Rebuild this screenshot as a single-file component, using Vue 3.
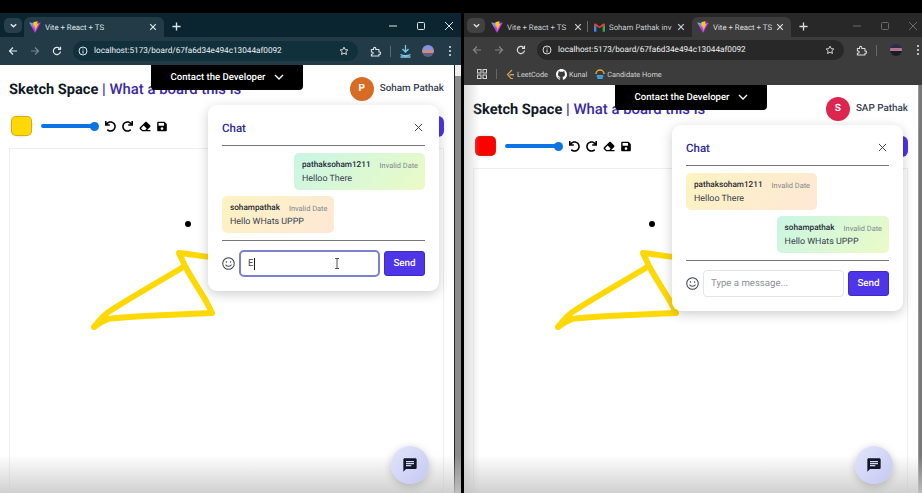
<template>
  <svg class="defs" width="0" height="0">
    <defs>
      <linearGradient id="viteA" x1="0" y1="0" x2="1" y2="1">
        <stop offset="0" stop-color="#41d1ff" />
        <stop offset="0.5" stop-color="#bd34fe" />
      </linearGradient>
      <symbol id="vite" viewBox="0 0 410 404">
        <path fill="url(#viteA)" d="M399.641 59.5246L215.643 388.545C211.844 395.338 202.084 395.378 198.228 388.618L10.5817 59.5563C6.38087 52.1896 12.6802 43.2665 21.0281 44.7586L205.223 77.6824C206.398 77.8924 207.601 77.8904 208.776 77.6763L389.119 44.8058C397.439 43.2894 403.768 52.1434 399.641 59.5246Z" />
        <path fill="#ffc517" d="M292.965 1.5744L156.801 28.2552C154.563 28.6937 152.906 30.5903 152.771 32.8664L144.395 174.33C144.198 177.662 147.258 180.248 150.51 179.498L188.42 170.749C191.967 169.931 195.172 173.055 194.443 176.622L183.18 231.775C182.422 235.487 185.907 238.661 189.532 237.56L212.947 230.446C216.577 229.344 220.065 232.527 219.297 236.242L201.398 322.875C200.278 328.294 207.486 331.249 210.492 326.603L212.5 323.5L323.454 102.072C325.312 98.3645 322.108 94.137 318.036 94.9228L279.014 102.454C275.347 103.161 272.227 99.746 273.262 96.1583L298.731 7.86689C299.767 4.27314 296.636 0.855181 292.965 1.5744Z" />
      </symbol>
      <symbol id="undo" viewBox="0 0 512 512">
        <path fill="currentColor" d="M212.333 224.333H12c-6.627 0-12-5.373-12-12V12C0 5.373 5.373 0 12 0h48c6.627 0 12 5.373 12 12v78.112C117.773 39.279 184.26 7.47 258.175 8.007c136.906.994 246.448 111.623 246.157 248.532C504.041 393.258 393.12 504 256.333 504c-64.089 0-122.496-24.313-166.51-64.215-5.099-4.622-5.334-12.554-.467-17.42l33.967-33.967c4.474-4.474 11.662-4.717 16.401-.525C170.76 415.336 211.58 432 256.333 432c97.268 0 176-78.716 176-176 0-97.267-78.716-176-176-176-58.496 0-110.28 28.476-142.274 72.333h98.274c6.627 0 12 5.373 12 12v48c0 6.627-5.373 12-12 12z" />
      </symbol>
      <symbol id="eraser" viewBox="0 0 512 512">
        <path fill="currentColor" d="M497.941 273.941c18.745-18.745 18.745-49.137 0-67.882l-160-160c-18.745-18.745-49.137-18.745-67.882 0l-256 256c-18.745 18.745-18.745 49.137 0 67.882l96 96A48.004 48.004 0 0 0 144 480h356c6.627 0 12-5.373 12-12v-40c0-6.627-5.373-12-12-12H355.883l142.058-142.059zm-302.627-62.627l137.373 137.373L265.373 416H150.628l-80-80 124.686-124.686z" />
      </symbol>
      <symbol id="save" viewBox="0 0 448 512">
        <path fill="currentColor" d="M433.941 129.941l-83.882-83.882A48 48 0 0 0 316.118 32H48C21.49 32 0 53.49 0 80v352c0 26.51 21.49 48 48 48h352c26.51 0 48-21.49 48-48V163.882a48 48 0 0 0-14.059-33.941zM224 416c-35.346 0-64-28.654-64-64 0-35.346 28.654-64 64-64s64 28.654 64 64c0 35.346-28.654 64-64 64zm96-304.52V212c0 6.627-5.373 12-12 12H76c-6.627 0-12-5.373-12-12V108c0-6.627 5.373-12 12-12h228.52c3.183 0 6.235 1.264 8.485 3.515l3.48 3.48A11.996 11.996 0 0 1 320 111.48z" />
      </symbol>
      <symbol id="star" viewBox="0 0 16 16">
        <path fill="none" stroke="currentColor" stroke-width="1.5" stroke-linejoin="round" d="M8 1.8l1.9 4 4.3.5-3.2 3 .9 4.3L8 11.5l-3.9 2.1.9-4.3-3.2-3 4.3-.5z" />
      </symbol>
      <symbol id="ext" viewBox="0 0 16 16">
        <path fill="none" stroke="currentColor" stroke-width="1.5" stroke-linejoin="round" d="M2 5h3.2V3.6a1.6 1.6 0 0 1 3.2 0V5H13v3.6h1a1.7 1.7 0 0 1 0 3.4h-1v2.5H2V12h1a1.7 1.7 0 0 0 0-3.4H2z" />
      </symbol>
    </defs>
  </svg>

  <div class="desktop">
    <section v-for="win in windows" :key="win.id" class="window" :class="win.id">
      <div class="tabstrip">
        <span class="tab-search">
          <svg width="9" height="9" viewBox="0 0 10 10"><path d="M2 3.5l3 3 3-3" fill="none" stroke="currentColor" stroke-width="1.6" /></svg>
        </span>
        <div
          v-for="tab in win.tabs"
          :key="tab.key"
          class="tab"
          :class="{ active: tab.active, sep: tab.sep }"
          :style="{ width: tab.width + 'px' }"
        >
          <svg v-if="tab.icon === 'vite'" class="favicon" width="12" height="12"><use href="#vite" /></svg>
          <svg v-else class="favicon" width="11" height="11" viewBox="0 0 16 12">
            <path d="M0 2v9a1 1 0 0 0 1 1h2.5V4.5z" fill="#4285f4" />
            <path d="M16 2v9a1 1 0 0 1-1 1h-2.5V4.5z" fill="#34a853" />
            <path d="M0 2.2C0 .6 1.8-.4 3 .6l5 3.8L13 .6c1.2-1 3 0 3 1.6l-3.5 2.6v-1L8 7.2 3.500 3.800v1z" fill="#ea4335" />
          </svg>
          <span class="tab-title">{{ tab.title }}</span>
          <svg class="tab-close" width="8" height="8" viewBox="0 0 10 10"><path d="M1.500 1.500l7 7m0-7l-7 7" stroke="currentColor" stroke-width="1.500" /></svg>
        </div>
        <svg class="newtab" width="9" height="9" viewBox="0 0 10 10"><path d="M5 .5v9M.5 5h9" stroke="currentColor" stroke-width="1.500" /></svg>
        <div class="win-controls">
          <svg width="10" height="10" viewBox="0 0 10 10"><path d="M1 5h8" stroke="currentColor" /></svg>
          <svg width="10" height="10" viewBox="0 0 10 10"><rect x="1.500" y="1.500" width="7" height="7" rx="1" fill="none" stroke="currentColor" /></svg>
          <svg width="10" height="10" viewBox="0 0 10 10"><path d="M1 1l8 8m0-8l-8 8" stroke="currentColor" /></svg>
        </div>
      </div>

      <div class="addressbar">
        <svg class="nav" width="10" height="10" viewBox="0 0 10 10"><path d="M9 5H1.500M5 1.500L1.500 5 5 8.500" fill="none" stroke="currentColor" stroke-width="1.200" /></svg>
        <svg class="nav fwd" width="10" height="10" viewBox="0 0 10 10"><path d="M1 5h7.500M5 1.500L8.500 5 5 8.500" fill="none" stroke="currentColor" stroke-width="1.200" /></svg>
        <svg class="nav reload" width="10" height="10" viewBox="0 0 10 10"><path d="M8.500 5.500A3.600 3.600 0 1 1 7.500 2.500M8.500.8v2.500H6" fill="none" stroke="currentColor" stroke-width="1.200" /></svg>
        <div class="omnibox">
          <svg width="10" height="10" viewBox="0 0 10 10"><circle cx="5" cy="5" r="4" fill="none" stroke="currentColor" /><path d="M5 4.500v3M5 2.500v1" stroke="currentColor" /></svg>
          <span class="url">localhost:5173/board/67fa6d34e494c13044af0092</span>
          <svg class="omni-star" width="10" height="10"><use href="#star" /></svg>
        </div>
        <svg class="tool ext-icon" width="11" height="11"><use href="#ext" /></svg>
        <span class="tool-sep"></span>
        <svg v-if="win.id === 'left'" class="tool download" width="11" height="13" viewBox="0 0 11 13">
          <path d="M5.500 0v6.500M2.500 4l3 3 3-3M.5 9.500c1.500 1.500 8.500 1.500 10 0M.5 12h10" fill="none" stroke="#7cc4ee" stroke-width="1.300" />
        </svg>
        <span class="profile"></span>
        <span class="kebab"><i></i><i></i><i></i></span>
      </div>

      <div v-if="win.bookmarks" class="bookmarks">
        <svg class="apps" width="10" height="10" viewBox="0 0 10 10">
          <rect x=".5" y=".5" width="3.500" height="3.500" fill="none" stroke="currentColor" />
          <rect x="6" y=".5" width="3.500" height="3.500" fill="none" stroke="currentColor" />
          <rect x=".5" y="6" width="3.500" height="3.500" fill="none" stroke="currentColor" />
          <rect x="6" y="6" width="3.500" height="3.500" fill="none" stroke="currentColor" />
        </svg>
        <span class="bm-sep"></span>
        <span class="bm leet">
          <svg width="9" height="11" viewBox="0 0 9 11">
            <path d="M6 1L1.500 5.500 5 9.500h2" fill="none" stroke="#e7a33d" stroke-width="1.200" />
            <path d="M3.500 5.800H8" stroke="#c9c9c9" stroke-width="1.100" />
          </svg>
          LeetCode
        </span>
        <span class="bm kunal">
          <svg width="11" height="11" viewBox="0 0 16 16">
            <path fill="#fff" d="M8 0C3.580 0 0 3.580 0 8c0 3.540 2.290 6.530 5.470 7.590.4.070.55-.17.55-.38 0-.19-.01-.82-.01-1.490-2.010.37-2.530-.49-2.690-.94-.09-.23-.48-.94-.82-1.130-.28-.15-.68-.52-.01-.53.630-.01 1.080.58 1.230.82.720 1.210 1.870.87 2.330.66.070-.52.280-.87.510-1.070-1.780-.2-3.640-.89-3.640-3.950 0-.87.310-1.590.82-2.150-.08-.2-.36-1.020.08-2.120 0 0 .67-.21 2.200.82.640-.18 1.320-.27 2-.27s1.360.09 2 .27c1.530-1.040 2.200-.82 2.200-.82.440 1.100.16 1.920.08 2.120.51.560.82 1.270.82 2.150 0 3.070-1.870 3.750-3.650 3.950.29.250.54.730.54 1.480 0 1.070-.01 1.930-.01 2.200 0 .21.150.46.550.38A8.010 8.010 0 0 0 16 8c0-4.420-3.580-8-8-8z" />
          </svg>
          Kunal
        </span>
        <span class="bm cand">
          <svg width="10" height="11" viewBox="0 0 10 11">
            <path d="M1 5a4 4 0 0 1 8 0" fill="none" stroke="#e7a33d" stroke-width="1.500" />
            <path d="M1.500 6h7L7.500 10h-5z" fill="#3f9bd0" />
          </svg>
          Candidate Home
        </span>
      </div>

      <div class="viewport">
        <main class="page">
          <header class="page-head">
            <h1>Sketch Space <span class="tagline">| What a board this is</span></h1>
            <div class="user">
              <span class="avatar" :style="{ background: win.avatarColor }">{{ win.initial }}</span>
              <span class="username">{{ win.user }}</span>
            </div>
          </header>

          <div class="tools">
            <span class="swatch-wrap"><span class="swatch" :style="{ background: win.color }"></span></span>
            <span class="slider"><i></i></span>
            <svg class="tbtn" width="11" height="11"><use href="#undo" /></svg>
            <svg class="tbtn redo" width="11" height="11"><use href="#undo" /></svg>
            <svg class="tbtn" width="12" height="11"><use href="#eraser" /></svg>
            <svg class="tbtn" width="10" height="11"><use href="#save" /></svg>
            <span class="share"></span>
          </div>

          <div class="canvas-box">
            <svg class="drawing" width="300" height="240" viewBox="0 0 300 240">
              <circle cx="178" :cy="win.dotY" r="3" fill="#000" />
              <path
                :transform="`translate(0 ${win.drawShift})`"
                d="M84 178 C90 170 96 164 103 160 C125 146 150 132 175 117 L169 104 C180 105 190 107 200 108 M175 117 C182 130 190 142 196 152 L202 164 C180 165 160 166 135 167 C118 168 105 169 98 170 C93 172 88 175 84 178"
                fill="none"
                stroke="#ffd906"
                stroke-width="6"
                stroke-linecap="round"
                stroke-linejoin="round"
              />
            </svg>
          </div>
        </main>

        <div class="scrollbar"><i></i></div>
        <div class="fade"></div>
        <div v-if="win.id === 'right'" class="side-fade"></div>

        <button class="contact">
          Contact the Developer
          <svg width="10" height="7" viewBox="0 0 10 7"><path d="M1 1l4 4 4-4" fill="none" stroke="#fff" stroke-width="1.300" /></svg>
        </button>

        <aside class="chat">
          <div class="chat-head">
            <span class="chat-title">Chat</span>
            <svg width="9" height="9" viewBox="0 0 10 10"><path d="M1 1l8 8m0-8l-8 8" stroke="#374151" stroke-width="1.100" /></svg>
          </div>
          <div class="messages">
            <div v-for="m in win.messages" :key="m.name" class="bubble" :class="m.mine ? 'mine' : 'theirs'">
              <div class="meta">
                <span class="name">{{ m.name }}</span>
                <span class="date">Invalid Date</span>
              </div>
              <div class="text">{{ m.text }}</div>
            </div>
          </div>
          <div class="composer">
            <svg class="smile" width="13" height="13" viewBox="0 0 14 14">
              <circle cx="7" cy="7" r="6.200" fill="none" stroke="#374151" stroke-width="1.100" />
              <circle cx="4.800" cy="5.500" r=".8" fill="#374151" />
              <circle cx="9.200" cy="5.500" r=".8" fill="#374151" />
              <path d="M3.800 8.200c.8 2.400 5.600 2.400 6.400 0" fill="none" stroke="#374151" stroke-width="1.100" />
            </svg>
            <div class="field">
              <input class="msg-input" :class="{ focused: win.draft }" :value="win.draft" placeholder="Type a message..." readonly />
              <template v-if="win.draft">
                <span class="caret"></span>
                <svg class="ibeam" width="6" height="11" viewBox="0 0 6 11"><path d="M1 .5h4M3 .5v10M1 10.500h4" stroke="#444" stroke-width=".9" fill="none" /></svg>
              </template>
            </div>
            <button class="send">Send</button>
          </div>
        </aside>

        <button class="fab">
          <svg width="16" height="16" viewBox="0 0 24 24"><path fill="#111827" d="M20 2H4c-1.100 0-1.990.9-1.990 2L2 22l4-4h14c1.100 0 2-.9 2-2V4c0-1.100-.9-2-2-2zM6 9h12v2H6V9zm8 5H6v-2h8v2zm4-6H6V6h12v2z" /></svg>
        </button>
      </div>
    </section>
  </div>
</template>

<script setup>
const windows = [
  {
    id: 'left',
    tabs: [{ key: 'a', title: 'Vite + React + TS', icon: 'vite', active: true, width: 140 }],
    bookmarks: false,
    user: 'Soham Pathak',
    initial: 'P',
    avatarColor: '#d96c24',
    color: '#ffd906',
    dotY: 75,
    drawShift: 0,
    draft: 'E',
    messages: [
      { name: 'pathaksoham1211', text: 'Helloo There', mine: true },
      { name: 'sohampathak', text: 'Hello WHats UPPP', mine: false }
    ]
  },
  {
    id: 'right',
    tabs: [
      { key: 'a', title: 'Vite + React + TS', icon: 'vite', sep: true, width: 103 },
      { key: 'b', title: 'Soham Pathak inv', icon: 'gmail', width: 103 },
      { key: 'c', title: 'Vite + React + TS', icon: 'vite', active: true, width: 99 }
    ],
    bookmarks: true,
    user: 'SAP Pathak',
    initial: 'S',
    avatarColor: '#dc2650',
    color: '#ff0000',
    dotY: 55,
    drawShift: -20,
    draft: '',
    messages: [
      { name: 'pathaksoham1211', text: 'Helloo There', mine: false },
      { name: 'sohampathak', text: 'Hello WHats UPPP', mine: true }
    ]
  }
]
</script>

<style>
html,
body {
  margin: 0;
  background: #000;
  overflow: hidden;
}
</style>

<style scoped>
.defs {
  position: absolute;
}
.desktop {
  width: 922px;
  height: 493px;
  padding-top: 13px;
  box-sizing: border-box;
  display: flex;
  gap: 3px;
  background: #000;
  font-family: Roboto, "Liberation Sans", sans-serif;
  text-rendering: geometricPrecision;
  overflow: hidden;
}
button,
input {
  text-rendering: geometricPrecision;
}
.window {
  width: 458px;
  display: flex;
  flex-direction: column;
  flex: none;
}
.window.left {
  width: 461px;
  --strip: #0a2530;
  --bar: #233b46;
  --omni: #10303c;
  --chrome-text: #dfe7ea;
}
.window.right {
  --strip: #282828;
  --bar: #3c3c3c;
  --omni: #282828;
  --chrome-text: #dcdcdc;
}
.tabstrip {
  height: 24px;
  flex: none;
  background: var(--strip);
  display: flex;
  align-items: flex-end;
  color: var(--chrome-text);
  position: relative;
  padding-left: 4px;
}
.tab-search {
  width: 18px;
  height: 15px;
  margin-bottom: 4px;
  margin-right: 2px;
  border-radius: 5px;
  background: rgba(255, 255, 255, 0.12);
  display: flex;
  align-items: center;
  justify-content: center;
}
.right .tab-search {
  margin-left: -1px;
  margin-right: 1px;
}
.tab {
  height: 20px;
  box-sizing: border-box;
  padding: 0 7px 0 5px;
  display: flex;
  align-items: center;
  gap: 4px;
  font-size: 7.800px;
  border-radius: 6px 6px 0 0;
  color: #c6ced2;
  position: relative;
}
.tab.active {
  background: var(--bar);
  color: var(--chrome-text);
}
.tab.sep::after {
  content: "";
  position: absolute;
  right: 1px;
  top: 4px;
  height: 11px;
  width: 1px;
  background: #666;
}
.favicon {
  flex: none;
}
.tab-title {
  flex: 1;
  white-space: nowrap;
  overflow: hidden;
}
.tab-close {
  flex: none;
}
.newtab {
  margin: 0 0 6px 8px;
}
.win-controls {
  margin-left: auto;
  margin-bottom: 6px;
  margin-right: 7px;
  display: flex;
  gap: 18px;
  color: #e4e4e4;
}
.right .win-controls {
  color: #6b6b6b;
  margin-right: 4px;
}
.addressbar {
  height: 28px;
  flex: none;
  background: var(--bar);
  display: flex;
  align-items: center;
  color: var(--chrome-text);
  padding-left: 8px;
  box-sizing: border-box;
}
.right .addressbar {
  height: 26px;
  padding-left: 8px;
}
.nav {
  margin-right: 12px;
  flex: none;
}
.nav.fwd {
  opacity: 0.45;
}
.right .nav:first-child {
  opacity: 0.45;
}
.nav.reload {
  margin-right: 11px;
}
.omnibox {
  width: 285px;
  height: 20px;
  border-radius: 10px;
  background: var(--omni);
  display: flex;
  align-items: center;
  padding: 0 9px 0 5px;
  box-sizing: border-box;
  gap: 6px;
  flex: none;
}
.right .omnibox {
  width: 307px;
}
.url {
  font-size: 8.200px;
  color: #eef1f2;
  white-space: nowrap;
}
.omni-star {
  margin-left: auto;
}
.ext-icon {
  margin-left: 12px;
}
.tool-sep {
  width: 1px;
  height: 11px;
  background: #5a6b72;
  margin: 0 9px;
}
.download {
  margin: 0 11px 0 0;
}
.profile {
  width: 12px;
  height: 12px;
  border-radius: 50%;
  background: linear-gradient(180deg, #8c8fe0 0 45%, #c98f7a 45% 70%, #5b5f8a 70%);
  margin-left: 0;
  flex: none;
}
.right .profile {
  background: linear-gradient(180deg, #2f2a4a 0 35%, #b0788f 35% 60%, #1b1b2a 60%);
  margin-left: 4px;
}
.kebab {
  display: flex;
  flex-direction: column;
  gap: 2px;
  margin-left: 15px;
}
.kebab i {
  width: 2px;
  height: 2px;
  background: #e8e8e8;
  border-radius: 50%;
}
.bookmarks {
  height: 22px;
  flex: none;
  background: var(--bar);
  display: flex;
  align-items: center;
  padding-left: 13px;
  color: #d4d4d4;
  font-size: 7.300px;
}
.bm-sep {
  width: 1px;
  height: 10px;
  background: #666;
  margin: 0 9px;
}
.bm {
  display: flex;
  align-items: center;
  gap: 2px;
  margin-right: 8px;
  white-space: nowrap;
}
.viewport {
  flex: 1;
  position: relative;
  background: #fff;
  overflow: hidden;
  display: flex;
  min-height: 0;
}
.page {
  width: 454px;
  flex: none;
  padding: 0 10px 0 9px;
  box-sizing: border-box;
  display: flex;
  flex-direction: column;
}
.page-head {
  height: 47px;
  flex: none;
  display: flex;
  align-items: center;
  justify-content: space-between;
}
.page-head h1 {
  margin: 0;
  font-size: 14.600px;
  font-weight: 700;
  color: #111827;
  white-space: nowrap;
}
.tagline {
  color: #3b2aa8;
  font-size: 14.900px;
  font-weight: 500;
}
.user {
  display: flex;
  align-items: center;
  gap: 6px;
  position: relative;
}
.avatar {
  width: 24px;
  height: 24px;
  border-radius: 50%;
  color: #fff;
  font-size: 10px;
  font-weight: 700;
  display: flex;
  align-items: center;
  justify-content: center;
}
.username {
  font-size: 9.900px;
  font-weight: 500;
  color: #374151;
}
.tools {
  height: 24px;
  flex: none;
  margin: 2px 0 10px;
  display: flex;
  align-items: center;
}
.swatch-wrap {
  width: 24px;
  height: 24px;
  border-radius: 50%;
  background: #eef1f6;
  display: flex;
  align-items: center;
  justify-content: center;
  margin-right: 8px;
  flex: none;
}
.swatch {
  width: 21px;
  height: 20px;
  border-radius: 5px;
  display: block;
  box-shadow: inset 0 0 0 1px rgba(120, 100, 40, 0.35);
}
.slider {
  width: 57px;
  height: 4px;
  border-radius: 2px;
  background: #0b74e5;
  position: relative;
  margin-right: 7px;
  flex: none;
}
.slider i {
  position: absolute;
  right: -1px;
  top: -2.500px;
  width: 9px;
  height: 9px;
  border-radius: 50%;
  background: #0b74e5;
}
.tbtn {
  color: #000;
  margin-right: 6px;
  flex: none;
}
.redo {
  transform: scaleX(-1);
}
.share {
  margin-left: auto;
  width: 60px;
  height: 21px;
  border-radius: 6px;
  background: #4f35e8;
}
.canvas-box {
  flex: 1;
  border: 1px solid #eceef0;
  position: relative;
}
.drawing {
  position: absolute;
  left: 0;
  top: 0;
}
.scrollbar {
  width: 7px;
  flex: none;
  background: #eee;
  position: relative;
  border-left: 1px solid #222;
}
.left .scrollbar i {
  position: absolute;
  left: 0;
  right: 0;
  top: 11px;
  bottom: 0;
  background: #8c8c8c;
  border-right: 1px solid #222;
}
.right .scrollbar {
  width: 4px;
  background: #777;
  border-left: 1px solid #999;
}
.fade {
  position: absolute;
  left: 0;
  right: 0;
  bottom: 0;
  height: 38px;
  background: linear-gradient(180deg, rgba(200, 200, 200, 0), rgba(200, 200, 200, 0.85));
  pointer-events: none;
}
.side-fade {
  position: absolute;
  left: 0;
  top: 0;
  bottom: 0;
  width: 16px;
  background: linear-gradient(90deg, rgba(190, 190, 190, 0.55), rgba(255, 255, 255, 0));
  pointer-events: none;
}
.contact {
  position: absolute;
  left: 151px;
  top: 0;
  width: 152px;
  height: 25px;
  border: 0;
  border-radius: 0 0 4px 4px;
  background: #000;
  color: #fff;
  font: 500 9.600px Roboto, sans-serif;
  display: flex;
  align-items: center;
  justify-content: center;
  gap: 8px;
}
.chat {
  position: absolute;
  left: 208px;
  top: 40px;
  width: 231px;
  height: 186px;
  box-sizing: border-box;
  padding: 14px;
  background: #fff;
  border-radius: 9px;
  box-shadow: 0 3px 12px rgba(0, 0, 0, 0.2);
  display: flex;
  flex-direction: column;
}
.chat-head {
  height: 27px;
  flex: none;
  display: flex;
  align-items: center;
  justify-content: space-between;
  padding-bottom: 9px;
  padding-right: 2px;
  box-sizing: border-box;
  border-bottom: 1px solid #777;
}
.chat-title {
  font-size: 11.500px;
  font-weight: 500;
  color: #312a91;
}
.messages {
  height: 95px;
  flex: none;
  box-sizing: border-box;
  padding-top: 7px;
  border-bottom: 1px solid #777;
  display: flex;
  flex-direction: column;
  gap: 6px;
}
.bubble {
  box-sizing: border-box;
  height: 37px;
  padding: 7px 7px 0 8px;
  border-radius: 5px;
}
.bubble.mine {
  align-self: flex-end;
  background: linear-gradient(135deg, #c9f5e4, #ebfbc6);
}
.bubble.theirs {
  align-self: flex-start;
  background: linear-gradient(135deg, #fdf3c2, #fee8d6);
}
.meta {
  display: flex;
  gap: 9px;
  align-items: center;
  white-space: nowrap;
}
.name {
  font-size: 8.200px;
  font-weight: 500;
  color: #1f2937;
}
.date {
  font-size: 7.400px;
  color: #7d8590;
}
.text {
  font-size: 8.900px;
  color: #374151;
  margin-top: 4px;
  white-space: nowrap;
}
.composer {
  display: flex;
  align-items: center;
  margin-top: 9px;
  gap: 4px;
}
.smile {
  flex: none;
}
.field {
  position: relative;
  flex: 1;
  min-width: 0;
}
.msg-input {
  display: block;
  width: 100%;
  height: 27px;
  box-sizing: border-box;
  border: 1px solid #e1e4e8;
  border-radius: 4px;
  padding: 0 7px;
  font: 9.600px Roboto, sans-serif;
  color: #374151;
  outline: none;
}
.msg-input::placeholder {
  color: #8b8f96;
}
.msg-input.focused {
  border: 2px solid #7c80cf;
  border-radius: 5px;
}
.caret {
  position: absolute;
  left: 15px;
  top: 8px;
  width: 1px;
  height: 12px;
  background: #222;
}
.ibeam {
  position: absolute;
  left: 95px;
  top: 8px;
}
.send {
  width: 41px;
  height: 25px;
  flex: none;
  border: 1px solid #3d2bc4;
  border-radius: 3px;
  background: #4f35e8;
  color: #fff;
  font: 500 9.800px Roboto, sans-serif;
  padding: 0;
}
.fab {
  position: absolute;
  left: 391px;
  bottom: 9px;
  width: 38px;
  height: 38px;
  border: 0;
  border-radius: 50%;
  background: linear-gradient(135deg, #e4e4fb, #c4c9f2);
  box-shadow: 0 2px 8px rgba(0, 0, 0, 0.2);
  display: flex;
  align-items: center;
  justify-content: center;
  padding: 0;
}
</style>
